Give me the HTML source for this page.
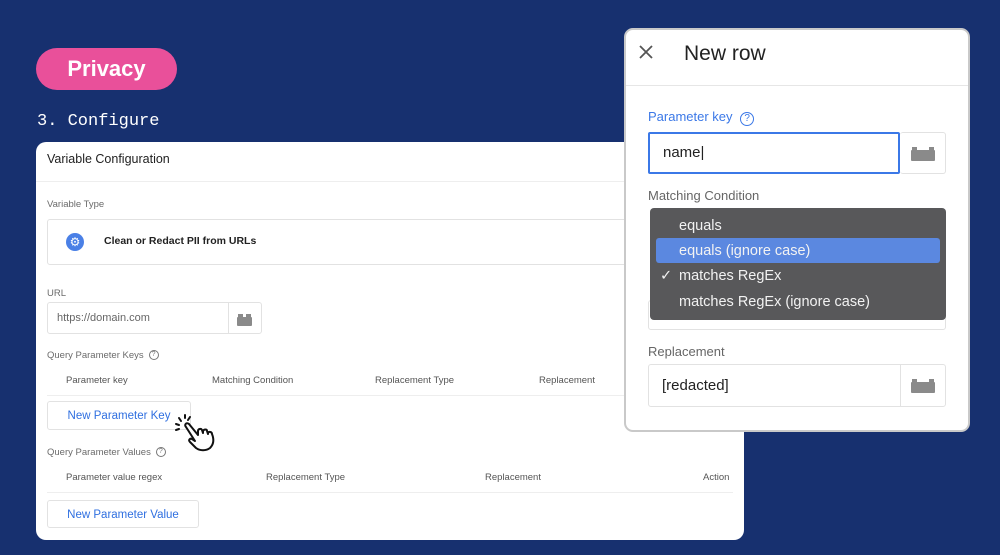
<!DOCTYPE html>
<html><head><style>
*{box-sizing:border-box;margin:0;padding:0}
body{width:1000px;height:555px;background:#17306f;position:relative;overflow:hidden;font-family:"Liberation Sans",Arial,sans-serif}
.a{position:absolute}
.pill{left:36px;top:48px;width:141px;height:42px;border-radius:21px;background:#e9509a;color:#fff;font-weight:bold;font-size:22px;text-align:center;line-height:42px}
.cfg{left:37px;top:112px;color:#fff;font-family:"Liberation Mono",monospace;font-size:17px}
.card{left:36px;top:142px;width:708px;height:398px;background:#fff;border-radius:10px;overflow:hidden}
.g{color:#6b6b6b;font-size:9.5px}
.h{color:#555;font-size:9.5px}
.box{border:1px solid #e2e2e2;border-radius:3px;background:#fff}
.btn{color:#2f6fe0;font-size:11.5px;text-align:center}
.lego{width:16px;height:10px;background:#8a8a8a;position:absolute;border-radius:1px}
.lego:before,.lego:after{content:"";position:absolute;top:-3px;width:5px;height:3px;background:#8a8a8a}
.lego:before{left:1px}.lego:after{right:1px}
.modal{left:624px;top:28px;width:346px;height:404px;background:#fff;border-radius:9px;border:2px solid #c9c9c9;overflow:hidden}
.dd{background:#58585a;border-radius:4px;color:#f2f2f2;font-size:14.5px}
.q{display:inline-block;width:10px;height:10px;border:1.2px solid #777;border-radius:50%;font-size:7px;text-align:center;line-height:8px;color:#777;vertical-align:middle;margin-left:5px}
</style></head><body>
<div class="a pill">Privacy</div>
<div class="a cfg">3. Configure</div>
<div class="a card">
  <div class="a" style="left:11px;top:10px;font-size:12.5px;color:#222">Variable Configuration</div>
  <div class="a" style="left:0;top:39px;width:708px;height:1px;background:#eee"></div>
  <div class="a g" style="left:11px;top:57px">Variable Type</div>
  <div class="a box" style="left:11px;top:77px;width:600px;height:46px"></div>
  <div class="a" style="left:30px;top:91px;width:18px;height:18px;border-radius:50%;background:#4a80e6;color:#fff;font-size:12px;text-align:center;line-height:18px">⚙</div>
  <div class="a" style="left:68px;top:93px;font-size:10.5px;font-weight:bold;color:#222">Clean or Redact PII from URLs</div>
  <div class="a g" style="left:11px;top:146px">URL</div>
  <div class="a box" style="left:11px;top:160px;width:215px;height:32px"></div>
  <div class="a" style="left:192px;top:160px;width:1px;height:32px;background:#e2e2e2"></div>
  <div class="lego" style="left:201px;top:175px;width:15px;height:9px"></div>
  <div class="a" style="left:21px;top:170px;font-size:11px;color:#666">https://domain.com</div>
  <div class="a g" style="left:11px;top:208px">Query Parameter Keys<span class="q">?</span></div>
  <div class="a h" style="left:30px;top:233px">Parameter key</div>
  <div class="a h" style="left:176px;top:233px">Matching Condition</div>
  <div class="a h" style="left:339px;top:233px">Replacement Type</div>
  <div class="a h" style="left:503px;top:233px">Replacement</div>
  <div class="a" style="left:11px;top:253px;width:686px;height:1px;background:#eee"></div>
  <div class="a box btn" style="left:11px;top:259px;width:144px;height:29px;line-height:29px">New Parameter Key</div>
  <div class="a g" style="left:11px;top:305px">Query Parameter Values<span class="q">?</span></div>
  <div class="a h" style="left:30px;top:330px">Parameter value regex</div>
  <div class="a h" style="left:230px;top:330px">Replacement Type</div>
  <div class="a h" style="left:449px;top:330px">Replacement</div>
  <div class="a h" style="left:667px;top:330px">Action</div>
  <div class="a" style="left:11px;top:350px;width:686px;height:1px;background:#eee"></div>
  <div class="a box btn" style="left:11px;top:358px;width:152px;height:28px;line-height:29px">New Parameter Value</div>
  <svg class="a" style="left:138px;top:272px" width="50" height="40" viewBox="0 0 50 40" fill="#fff" stroke="#111" stroke-width="2" stroke-linecap="round" stroke-linejoin="round">
    <path d="M2 10l3 1M5 4l2 3M11 1v3M16 3l-2 3M2 16l3-1" fill="none"/>
    <path d="M12 13c-2-2 0-5 3-3l9 11 0-4c0-2 3-3 4-1l1 3 0-2c1-2 4-2 4 0l1 3v-1c1-2 4-1 4 1 2 5 2 10-2 14-4 3-10 3-14 0l-6-6c-2-2 0-4 2-3l3 2z"/>
  </svg>
</div>
<div class="a modal">
  <svg class="a" style="left:12px;top:14px" width="16" height="16" viewBox="0 0 16 16" stroke="#555" stroke-width="1.8"><path d="M2 2L14 14M14 2L2 14"/></svg>
  <div class="a" style="left:58px;top:12px;font-size:21px;color:#222">New row</div>
  <div class="a" style="left:0;top:55px;width:346px;height:1px;background:#e6e6e6"></div>
  <div class="a" style="left:22px;top:79px;font-size:13px;color:#3b78e7">Parameter key <span style="display:inline-block;width:14px;height:14px;border:1.5px solid #3b78e7;border-radius:50%;font-size:10px;text-align:center;line-height:12px;margin-left:4px">?</span></div>
  <div class="a" style="left:22px;top:102px;width:252px;height:42px;border:2px solid #3b78e7;border-radius:2px"></div>
  <div class="a" style="left:37px;top:114px;font-size:15px;color:#222">name|</div>
  <div class="a box" style="left:274px;top:102px;width:46px;height:42px;border-left:none"></div>
  <div class="lego" style="left:285px;top:120px;width:24px;height:11px"></div>
  <div class="a" style="left:22px;top:158px;font-size:13px;color:#666">Matching Condition</div>
  <div class="a box" style="left:22px;top:270px;width:298px;height:30px"></div>
  <div class="a dd" style="left:24px;top:178px;width:296px;height:112px">
    <div class="a" style="left:6px;top:30px;width:284px;height:25px;background:#5b88e0;border-radius:3px"></div>
    <div class="a" style="left:29px;top:10px">equals</div>
    <div class="a" style="left:29px;top:35px">equals (ignore case)</div>
    <div class="a" style="left:10px;top:60px">✓</div>
    <div class="a" style="left:29px;top:60px">matches RegEx</div>
    <div class="a" style="left:29px;top:86px">matches RegEx (ignore case)</div>
  </div>
  <div class="a" style="left:22px;top:314px;font-size:13px;color:#666">Replacement</div>
  <div class="a box" style="left:22px;top:334px;width:298px;height:43px"></div>
  <div class="a" style="left:274px;top:334px;width:1px;height:43px;background:#e2e2e2"></div>
  <div class="lego" style="left:285px;top:352px;width:24px;height:11px"></div>
  <div class="a" style="left:36px;top:347px;font-size:15px;color:#222">[redacted]</div>
</div>
</body></html>
